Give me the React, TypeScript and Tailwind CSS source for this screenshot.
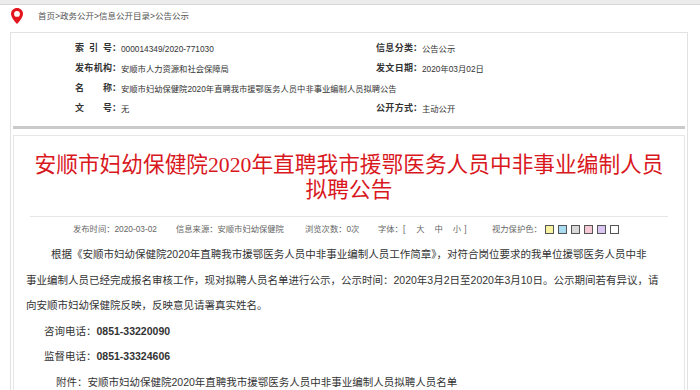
import React from "react";

const Label = ({ chars }: { chars: string[] }) => (
  <span className="flex justify-end font-bold text-[#333] text-[9px]">
    <span className="flex w-[37px] justify-between">
      {chars.map((c, i) => (
        <span key={i}>{c}</span>
      ))}
    </span>
    <span className="w-[9px]">：</span>
  </span>
);

export default function App() {
  const swatches = ["bg-[#f7f3a1]", "bg-[#a9dcf3]", "bg-[#d9d9d9]", "bg-[#f6c9d6]", "bg-[#dcc6f3]", "bg-white"];
  return (
    <div className="w-[700px] h-[390px] overflow-hidden bg-white font-['Liberation_Sans','Noto_Sans_CJK_SC',sans-serif] text-[#333]">
      <div className="h-[5px] bg-[#ececec] border-b border-[#d8d8d8]" />
      <div className="flex h-[20px] items-center pl-[11px] mt-[1px]">
        <svg width="12" height="16" viewBox="0 0 12 16" className="shrink-0">
          <path d="M6 0C2.7 0 0 2.6 0 5.9C0 9.8 6 16 6 16C6 16 12 9.8 12 5.9C12 2.6 9.3 0 6 0Z" fill="#e3161d" />
          <circle cx="6" cy="5.9" r="2.9" fill="#fff" />
        </svg>
        <span className="ml-[15px] text-[8.5px] text-[#555]">首页&gt;政务公开&gt;信息公开目录&gt;公告公示</span>
      </div>

      <div className="ml-[10px] mt-[6px] w-[678px] border border-b-0 border-[#e2e2e2] pl-[2px] pr-[2px] h-[400px]">
        <div className="pt-[6px] pb-[7px] border-b-[3px] border-[#cacaca]">
          <div className="flex h-[20px] items-center">
            <div className="flex w-[309px] items-center">
              <div className="w-[108px] flex justify-end">
                <Label chars={["索", "引", "号"]} />
              </div>
              <span className="text-[8.3px]">000014349/2020-771030</span>
            </div>
            <div className="flex items-center">
              <div className="w-[100px] flex justify-end">
                <Label chars={["信", "息", "分", "类"]} />
              </div>
              <span className="text-[8.3px]">公告公示</span>
            </div>
          </div>
          <div className="flex h-[20px] items-center">
            <div className="flex w-[309px] items-center">
              <div className="w-[108px] flex justify-end">
                <Label chars={["发", "布", "机", "构"]} />
              </div>
              <span className="text-[8.3px]">安顺市人力资源和社会保障局</span>
            </div>
            <div className="flex items-center">
              <div className="w-[100px] flex justify-end">
                <Label chars={["发", "文", "日", "期"]} />
              </div>
              <span className="text-[8.3px]">2020年03月02日</span>
            </div>
          </div>
          <div className="flex h-[20px] items-center">
            <div className="w-[108px] flex justify-end">
              <Label chars={["名", "称"]} />
            </div>
            <span className="text-[8.3px]">安顺市妇幼保健院2020年直聘我市援鄂医务人员中非事业编制人员拟聘公告</span>
          </div>
          <div className="flex h-[20px] items-center">
            <div className="flex w-[309px] items-center">
              <div className="w-[108px] flex justify-end">
                <Label chars={["文", "号"]} />
              </div>
              <span className="text-[8.3px]">无</span>
            </div>
            <div className="flex items-center">
              <div className="w-[100px] flex justify-end">
                <Label chars={["公", "开", "方", "式"]} />
              </div>
              <span className="text-[8.3px]">主动公开</span>
            </div>
          </div>
        </div>

        <div className="mt-[6px] border border-[#e6e6e6] h-[300px]">
          <h1 className="pt-[17px] text-center text-[21.7px] leading-[25px] text-[#d9181e] font-normal font-['Liberation_Serif','Noto_Sans_CJK_SC',serif]">
            安顺市妇幼保健院2020年直聘我市援鄂医务人员中非事业编制人员
            <br />
            拟聘公告
          </h1>
          <div className="mx-[16px] mt-[13px] border-t border-[#e6e6e6]" />
          <div className="mt-[4px] flex h-[16px] items-center pl-[59px] text-[8.3px] text-[#666]">
            <span className="w-[103px]">发布时间：2020-03-02</span>
            <span className="w-[129px]">信息来源：安顺市妇幼保健院</span>
            <span className="w-[73px]">浏览次数：0次</span>
            <span className="w-[114px] flex">
              <span>字体：[</span>
              <span className="ml-[11px]">大</span>
              <span className="ml-[10px]">中</span>
              <span className="ml-[10px]">小</span>
              <span className="ml-[3px]">]</span>
            </span>
            <span className="w-[53px]">视力保护色：</span>
            <span className="flex gap-[4px]">
              {swatches.map((s, i) => (
                <span key={i} className={`block w-[9px] h-[9px] border border-[#555] ${s}`} />
              ))}
            </span>
          </div>
          <div className="mt-[5px] pl-[12px] text-[10.5px] leading-[25.5px] text-[#333]">
            <p className="w-[660px] whitespace-nowrap">
              <span className="pl-[25px]">根据《安顺市妇幼保健院2020年直聘我市援鄂医务人员中非事业编制人员工作简章》，对符合岗位要求的我单位援鄂医务人员中非</span>
              <br />
              事业编制人员已经完成报名审核工作，现对拟聘人员名单进行公示，公示时间：2020年3月2日至2020年3月10日。公示期间若有异议，请
              <br />
              向安顺市妇幼保健院反映，反映意见请署真实姓名。
            </p>
            <p className="pl-[18px]">
              咨询电话：<span className="font-bold">0851-33220090</span>
            </p>
            <p className="pl-[18px]">
              监督电话：<span className="font-bold">0851-33324606</span>
            </p>
            <p className="pl-[30px]">附件：安顺市妇幼保健院2020年直聘我市援鄂医务人员中非事业编制人员拟聘人员名单</p>
          </div>
        </div>
      </div>
    </div>
  );
}
